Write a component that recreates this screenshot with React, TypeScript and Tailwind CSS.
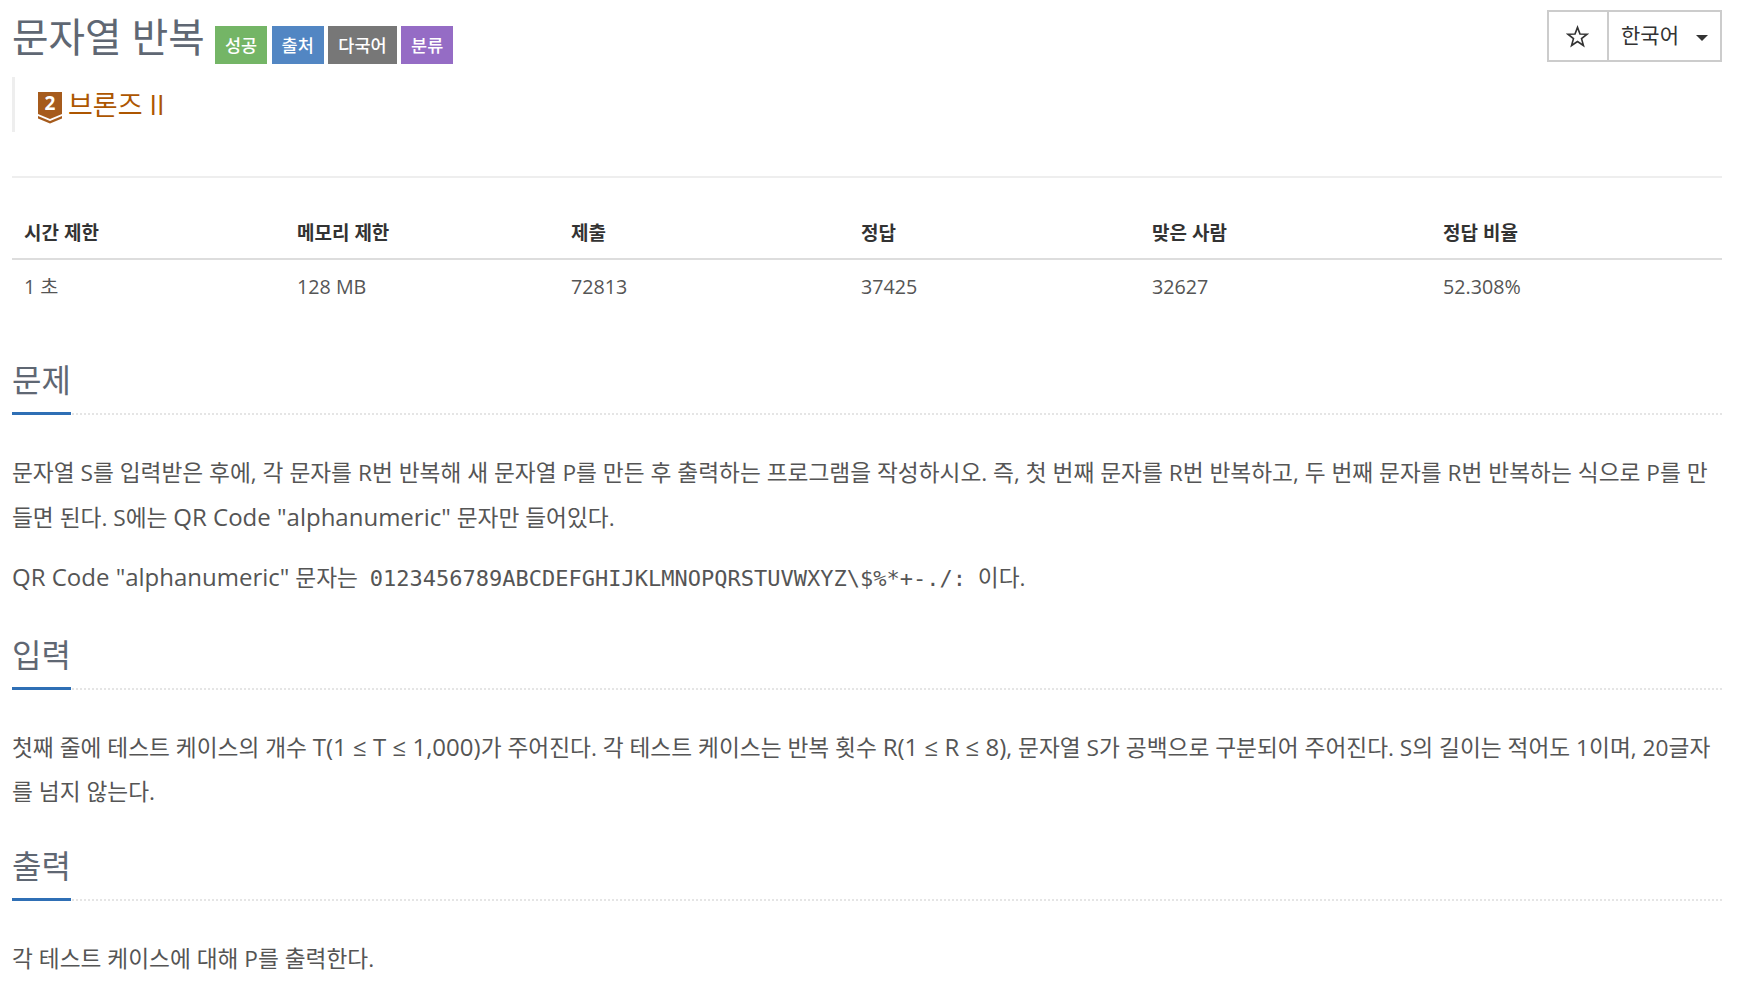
const sans = "font-['Open_Sans','Noto_Sans_CJK_KR',sans-serif]";

const COLUMNS = [
  { head: "시간 제한", value: "1 초" },
  { head: "메모리 제한", value: "128 MB" },
  { head: "제출", value: "72813" },
  { head: "정답", value: "37425" },
  { head: "맞은 사람", value: "32627" },
  { head: "정답 비율", value: "52.308%" },
];

const Badge = ({ label, color }: { label: string; color: string }) => (
  <span
    className={`flex h-[38px] items-center justify-center px-[10px] text-[17.5px] font-medium text-white ${color}`}
  >
    {label}
  </span>
);

const Section = ({ title, children }: { title: string; children: React.ReactNode }) => (
  <section>
    <div className="relative border-b-2 border-dotted border-[#e5e5e5]">
      <h2 className="inline-block pb-[11px] text-[32px] leading-[44px] text-[#5f6773]">{title}</h2>
      <div className="absolute bottom-[-2px] left-0 h-[3px] w-[59px] bg-[#2f6fb5]" />
    </div>
    {children}
  </section>
);

// latin runs sit a little larger than the hangul around them
const En = ({ children }: { children: React.ReactNode }) => <span className="text-[24px]">{children}</span>;

const App = () => {
  return (
    <div className={`min-h-[998px] overflow-hidden bg-white pl-[12px] pr-[24px] text-[#555] ${sans}`}>
      <div className="flex items-start justify-between pt-[10px]">
        <div className="flex items-center">
          <h1 className="text-[39.7px] leading-[50px] text-[#5f6773]">문자열 반복</h1>
          <div className="ml-[10px] mt-[16px] flex gap-[4.5px]">
            <Badge label="성공" color="bg-[#74b566]" />
            <Badge label="출처" color="bg-[#5286c3]" />
            <Badge label="다국어" color="bg-[#777777]" />
            <Badge label="분류" color="bg-[#956cc5]" />
          </div>
        </div>
        <div className="flex h-[52px] border-2 border-[#cccccc] text-[#333]">
          <div className="flex w-[60px] items-center justify-center border-r-2 border-[#cccccc] pr-[1px]">
            <svg width="23" height="23" viewBox="0 0 24 24" fill="none" stroke="#333" strokeWidth="1.7">
              <polygon points="12,2.5 14.6,9.4 22,9.6 16.2,14.2 18.2,21.4 12,17.2 5.8,21.4 7.8,14.2 2,9.6 9.4,9.4" />
            </svg>
          </div>
          <div className="flex w-[111px] items-center pl-[12px] text-[21px]">
            한국어
            <span className="ml-[17px] mt-[4px] h-0 w-0 border-x-[6px] border-t-[6px] border-x-transparent border-t-[#333]" />
          </div>
        </div>
      </div>

      <div className="mt-[13px] flex h-[55px] border-l-[3px] border-[#eeeeee] pl-[23px]">
        <div className="flex h-[56px] items-center text-[27px] text-[#ad5600]">
          <svg width="24" height="32" viewBox="0 0 24 32" className="mr-[6px] mt-[6px] overflow-visible">
            <path d="M0 0H24V22L12 27L0 22Z" fill="#a65b1c" />
            <path d="M0 24L12 29L24 24V26.5L12 31.5L0 26.5Z" fill="#a65b1c" />
            <text x="12" y="18" textAnchor="middle" fontSize="19" fontWeight="700" fill="#fff" fontFamily="Open Sans">
              2
            </text>
          </svg>
          브론즈 II
        </div>
      </div>

      <div className="mt-[44px] border-t-2 border-[#eeeeee]" />

      <div className="mt-[39px] grid grid-cols-[273px_274px_290px_291px_291px_1fr] text-[19px]">
        {COLUMNS.map((col) => (
          <div key={col.head} className="border-b-2 border-[#dddddd] px-[12px] pb-[9px] font-bold leading-[32px] text-[#333]">
            {col.head}
          </div>
        ))}
        {COLUMNS.map((col) => (
          <div key={col.value} className="px-[12px] py-[11px] text-[19.7px] leading-[32px]">
            {col.value}
          </div>
        ))}
      </div>

      <div className="mt-[44px]">
        <Section title="문제">
          <div className="mt-[36px] text-[22.7px] leading-[44px]">
            <p>
              문자열 S를 입력받은 후에, 각 문자를 R번 반복해 새 문자열 P를 만든 후 출력하는 프로그램을 작성하시오. 즉, 첫 번째 문자를 R번 반복하고, 두 번째 문자를 R번 반복하는 식으로 P를 만들면 된다. S에는 <En>QR Code "alphanumeric"</En> 문자만 들어있다.
            </p>
            <p className="mt-[15px]">
              <En>QR Code "alphanumeric"</En> 문자는{" "}
              <code className="mx-[6px] font-['DejaVu_Sans_Mono',monospace] text-[22px]">
                0123456789ABCDEFGHIJKLMNOPQRSTUVWXYZ\$%*+-./:
              </code>{" "}
              이다.
            </p>
          </div>
        </Section>
      </div>

      <div className="mt-[32px]">
        <Section title="입력">
          <p className="mt-[35px] text-[22.7px] leading-[44px]">
            첫째 줄에 테스트 케이스의 개수 <En>T(1 ≤ T ≤ 1,000)</En>가 주어진다. 각 테스트 케이스는 반복 횟수 <En>R(1 ≤ R ≤ 8)</En>, 문자열 S가 공백으로 구분되어 주어진다. S의 길이는 적어도 1이며, 20글자를 넘지 않는다.
          </p>
        </Section>
      </div>

      <div className="mt-[30px]">
        <Section title="출력">
          <p className="mt-[36px] text-[22.7px] leading-[44px]">각 테스트 케이스에 대해 P를 출력한다.</p>
        </Section>
      </div>
    </div>
  );
};

export default App;
